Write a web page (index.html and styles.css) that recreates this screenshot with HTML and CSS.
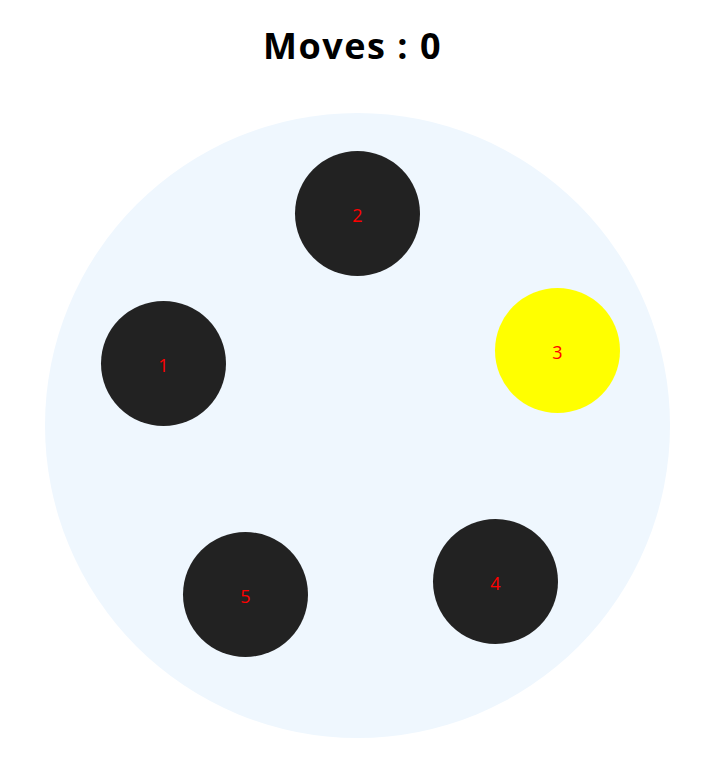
FILE: index.html
```html
<!DOCTYPE html>
<html lang="en">
<head>
    <meta charset="UTF-8">
    <title>Hanoi Circle</title>
    <link rel="stylesheet" href="styles.css">
</head>
<body>

    <h1 class="moves">Moves : <span id="count">0</span></h1>

    <div class="board">
        <div class="disk n2">2</div>
        <div class="disk n3 active">3</div>
        <div class="disk n1">1</div>
        <div class="disk n5">5</div>
        <div class="disk n4">4</div>
    </div>

</body>
</html>
```

FILE: styles.css
```css
body{
    margin: 0;
    font-family: "Open Sans", "Noto Sans", sans-serif;
}

.moves{
    text-align: center;
    font-size: 36px;
    font-weight: bold;
    letter-spacing: 1.5px;
    margin: 21px 0 0 0;
    padding-right: 4px;
    line-height: 50px;
    color: #000;
}

.board{
    position: relative;
    width: 625px;
    height: 625px;
    margin: 42px 0 0 45px;
    border-radius: 50%;
    background-color: #EFF7FE;
}

.disk{
    position: absolute;  /* 원판 위치는 원 위의 좌표 */
    width: 125px;
    height: 123px;
    padding-top: 2px;
    border-radius: 50%;
    background-color: #222222;
    color: #FF0000;
    font-size: 18px;
    display: flex;
    align-items: center;
    justify-content: center;
}

.active{
    background-color: #FFFF00;
}

.n2{ left: 250px; top: 38px; }
.n3{ left: 450px; top: 175px; }
.n1{ left: 56px;  top: 188px; }
.n5{ left: 138px; top: 419px; }
.n4{ left: 388px; top: 406px; }
```
